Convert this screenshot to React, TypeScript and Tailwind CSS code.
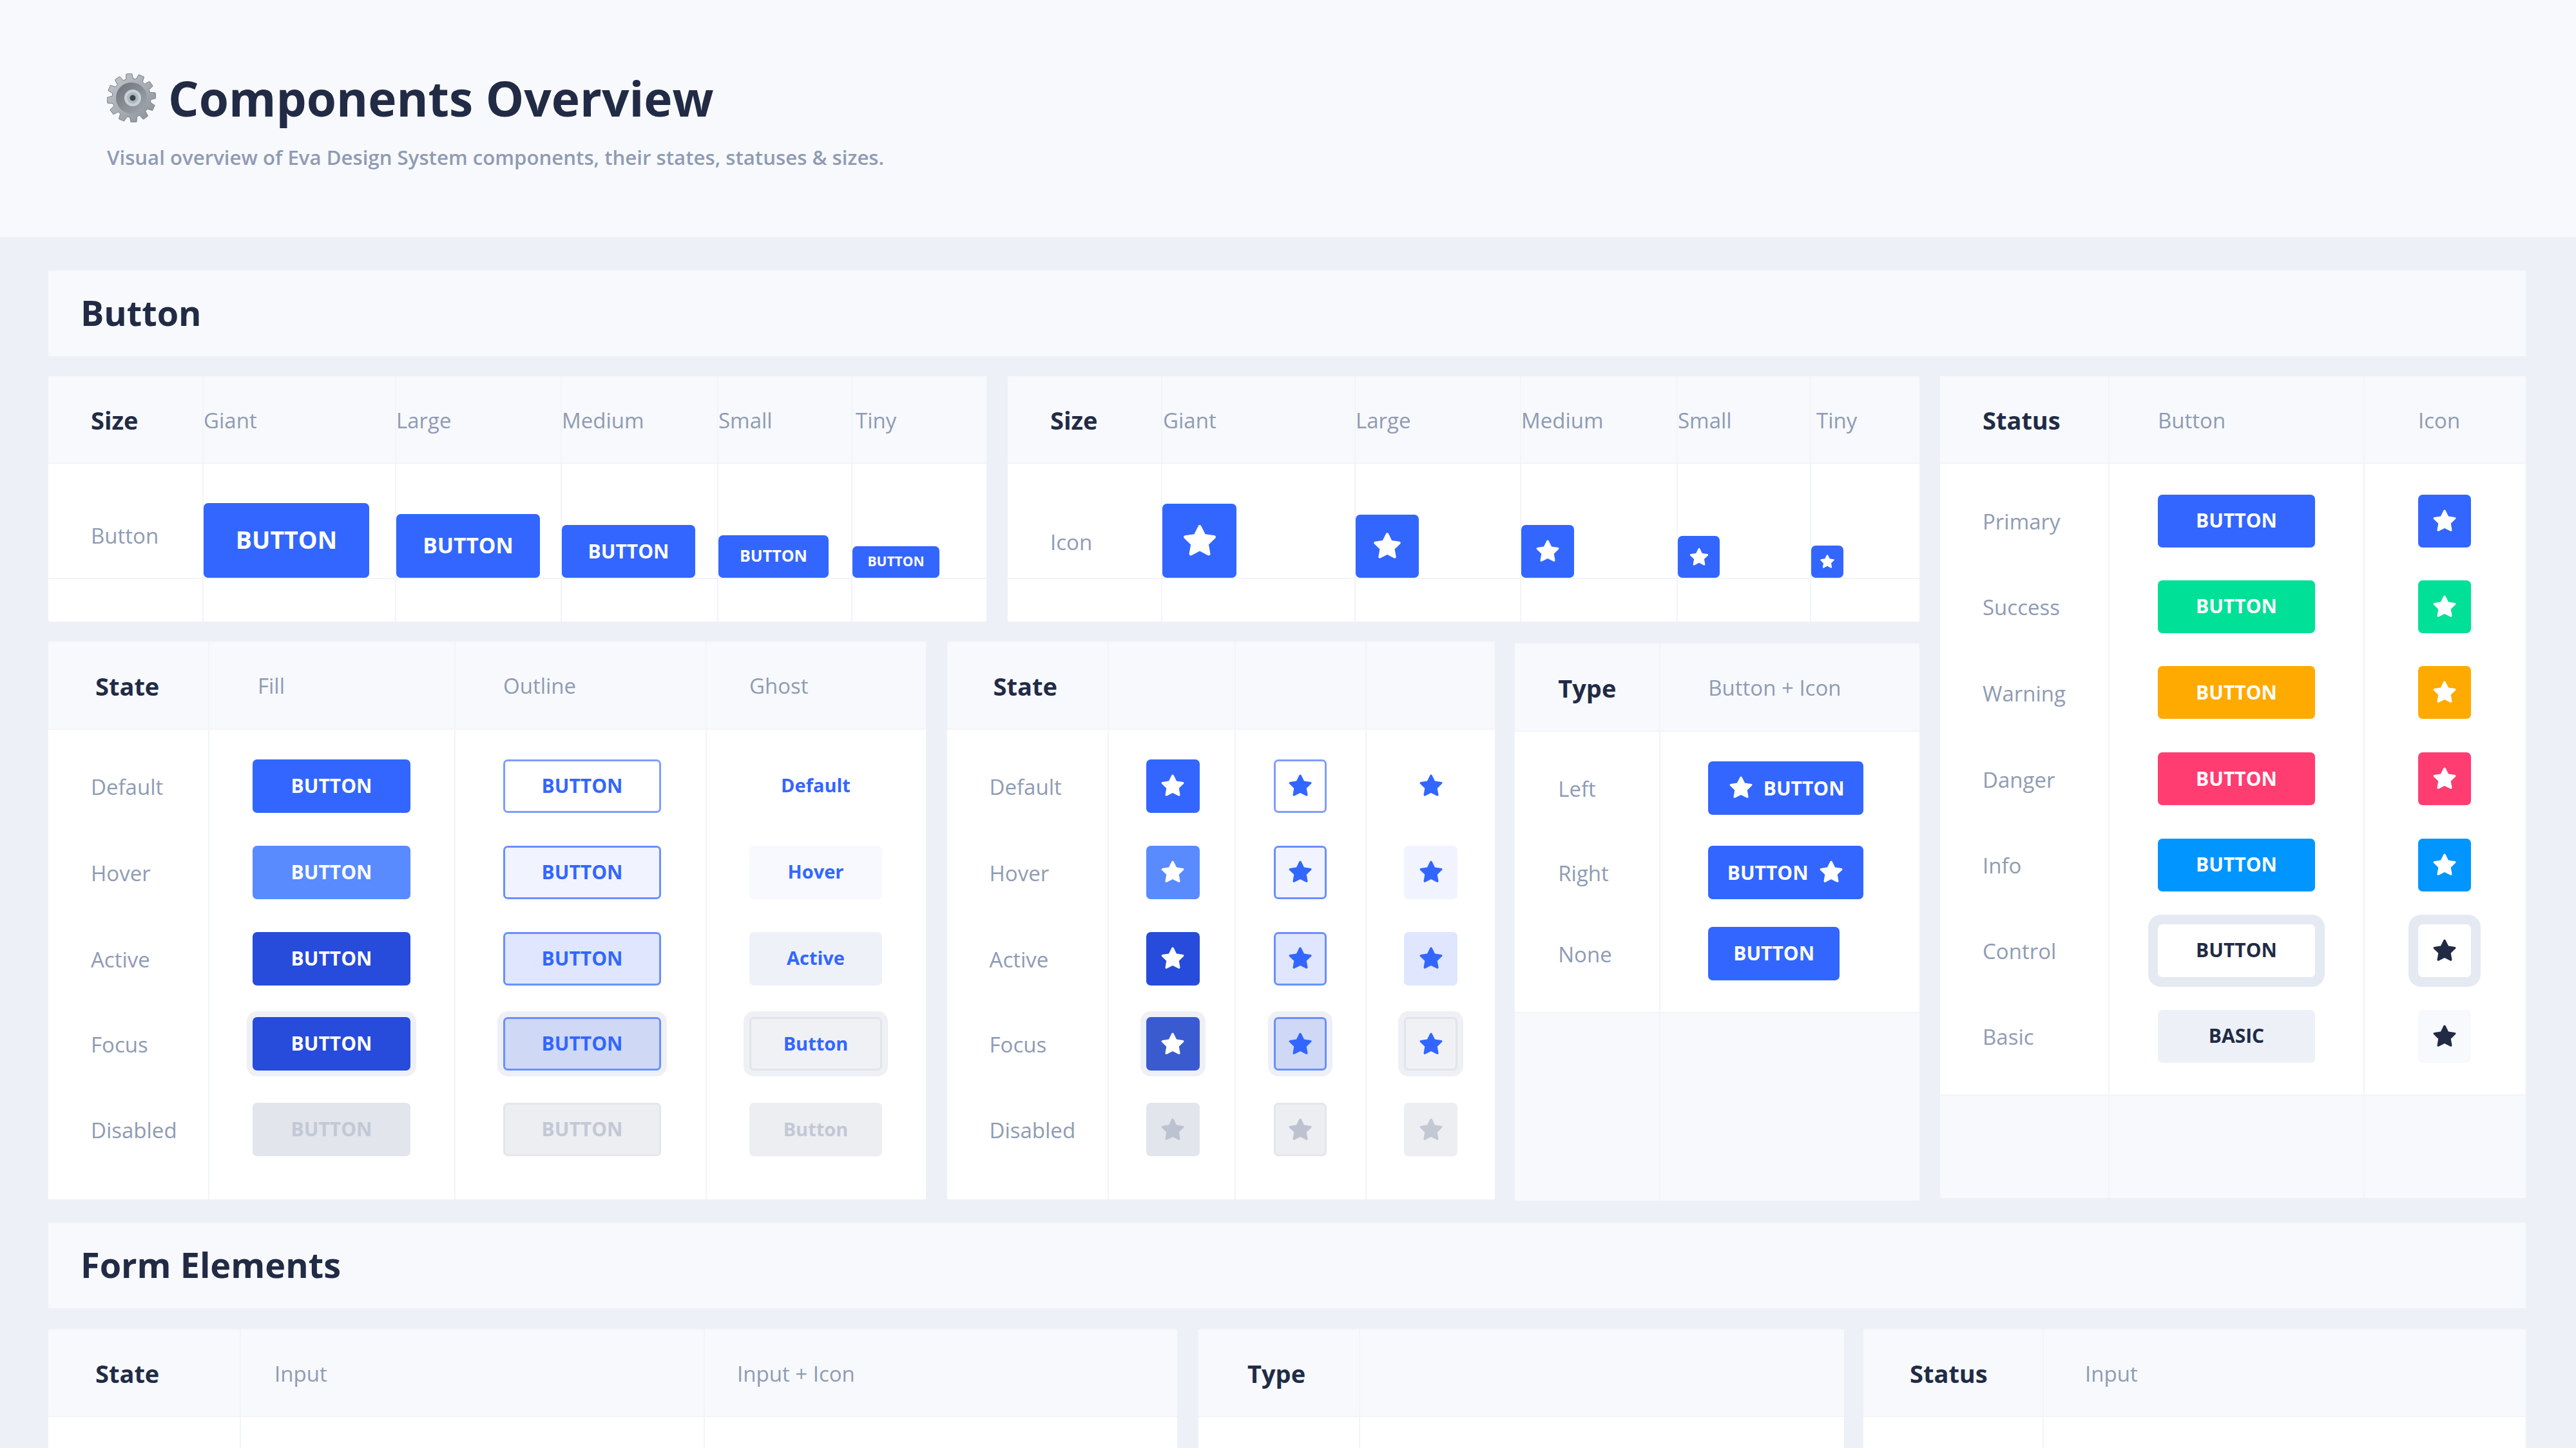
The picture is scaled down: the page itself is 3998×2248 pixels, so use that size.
import React from "react";

const STAR =
  "M17.56 21a1 1 0 0 1-.46-.11L12 18.22l-5.1 2.67a1 1 0 0 1-1.45-1.06l1-5.63-4.12-4a1 1 0 0 1-.25-1 1 1 0 0 1 .81-.68l5.7-.83 2.51-5.13a1 1 0 0 1 1.8 0l2.54 5.12 5.7.83a1 1 0 0 1 .81.68 1 1 0 0 1-.25 1l-4.12 4 1 5.63a1 1 0 0 1-.4 1 1 1 0 0 1-.62.18z";

function Star({ size = 42, color = "#ffffff" }: { size?: number; color?: string }) {
  return (
    <svg width={size} height={size} viewBox="0 0 24 24" fill={color} className="shrink-0">
      <path d={STAR} />
    </svg>
  );
}

function Gear() {
  const pts: string[] = [];
  const n = 12;
  for (let i = 0; i < n; i++) {
    const a = (i / n) * Math.PI * 2 - 0.1;
    const s = (Math.PI * 2) / n;
    const p = (r: number, o: number) =>
      `${(38 + r * Math.cos(a + o * s)).toFixed(1)},${(38 + r * Math.sin(a + o * s)).toFixed(1)}`;
    pts.push(p(30, -0.36), p(38, -0.22), p(38, 0.22), p(30, 0.36));
  }
  return (
    <svg width="76" height="76" viewBox="0 0 76 76" className="shrink-0">
      <defs>
        <linearGradient id="gearOuter" x1="0" y1="0" x2="1" y2="1">
          <stop offset="0" stopColor="#c2c8ce" />
          <stop offset="0.5" stopColor="#a8aeb5" />
          <stop offset="1" stopColor="#898e95" />
        </linearGradient>
        <linearGradient id="gearInner" x1="0" y1="0" x2="1" y2="1">
          <stop offset="0" stopColor="#6d7279" />
          <stop offset="1" stopColor="#a3a8ae" />
        </linearGradient>
      </defs>
      <polygon points={pts.join(" ")} fill="url(#gearOuter)" stroke="#7b8087" strokeWidth="1" />
      <circle cx="38" cy="38" r="24" fill="url(#gearInner)" />
      <circle cx="40" cy="38" r="13" fill="#c8d1da" />
      <circle cx="40" cy="38" r="9" fill="#aeb8c2" />
      <circle cx="40" cy="38" r="4.5" fill="#3f444b" />
    </svg>
  );
}

type Btn = {
  w: number;
  h: number;
  bg?: string;
  fg?: string;
  border?: string;
  ring?: string;
  ringW?: number;
  text?: string;
  fs?: number;
  star?: number;
};

function B({ w, h, bg = "transparent", fg = "#ffffff", border, ring, ringW = 9, text, fs = 30, star }: Btn) {
  return (
    <div
      className={`flex items-center justify-center rounded-[7px] font-bold ${text ? "pb-[2px]" : ""}`}
      style={{
        width: w,
        height: h,
        background: bg,
        color: fg,
        fontSize: fs,
        border: border ? `3px solid ${border}` : undefined,
        boxShadow: ring ? `0 0 0 ${ringW}px ${ring}` : undefined,
      }}
    >
      {text}
      {star ? <Star size={star} color={fg} /> : null}
    </div>
  );
}

function Label({ children }: { children: React.ReactNode }) {
  return <span className="mt-[2px] text-[33px] font-medium leading-none text-[#8f9bb3]">{children}</span>;
}
function HeadStrong({ children }: { children: React.ReactNode }) {
  return <span className="mt-[2px] text-[38px] font-bold leading-none text-[#222b45]">{children}</span>;
}

function Head({ cols, items, height = 136 }: { cols: string; items: { t?: string; strong?: boolean; pl: number }[]; height?: number }) {
  return (
    <div className="grid border-b-2 border-[#f1f4f9] bg-[#f7f9fc]" style={{ gridTemplateColumns: cols, height }}>
      {items.map((it, i) => (
        <div key={i} className={`flex items-center ${i ? "border-l-2 border-[#f1f4f9]" : ""}`} style={{ paddingLeft: it.pl }}>
          {it.t ? it.strong ? <HeadStrong>{it.t}</HeadStrong> : <Label>{it.t}</Label> : null}
        </div>
      ))}
    </div>
  );
}

function Row({ cols, height, cells }: { cols: string; height: number; cells: { node: React.ReactNode; pl?: number; center?: boolean }[] }) {
  return (
    <div className="grid" style={{ gridTemplateColumns: cols, height }}>
      {cells.map((c, i) => (
        <div
          key={i}
          className={`flex items-center ${c.center ? "justify-center" : ""} ${i ? "border-l-2 border-[#f1f4f9]" : ""}`}
          style={{ paddingLeft: c.pl ?? 0 }}
        >
          {c.node}
        </div>
      ))}
    </div>
  );
}

function Filler({ cols, n, height, bg = "#ffffff", top = false }: { cols: string; n: number; height?: number; bg?: string; top?: boolean }) {
  return (
    <div
      className={`grid ${top ? "border-t-2 border-[#f1f4f9]" : ""} ${height ? "" : "grow"}`}
      style={{ gridTemplateColumns: cols, height, background: bg }}
    >
      {Array.from({ length: n }).map((_, i) => (
        <div key={i} className={i ? "border-l-2 border-[#f1f4f9]" : ""} />
      ))}
    </div>
  );
}

function SizeCard({
  width,
  cols,
  items,
  label,
  labelPb,
}: {
  width: number;
  cols: string;
  items: { title: string; pl?: number; node: React.ReactNode }[];
  label: string;
  labelPb: number;
}) {
  return (
    <div className="flex h-[381px] flex-col overflow-hidden rounded-[3px] bg-white" style={{ width }}>
      <Head cols={cols} items={[{ t: "Size", strong: true, pl: 66 }, ...items.map((i) => ({ t: i.title, pl: i.pl ?? 0 }))]} />
      <div className="grid h-[177px]" style={{ gridTemplateColumns: cols }}>
        <div className="flex items-end pl-[66px]" style={{ paddingBottom: labelPb }}>
          <Label>{label}</Label>
        </div>
        {items.map((it, i) => (
          <div key={i} className="flex items-end border-l-2 border-[#f1f4f9]">
            {it.node}
          </div>
        ))}
      </div>
      <Filler cols={cols} n={items.length + 1} top />
    </div>
  );
}

const P = "#3366ff";
const states = ["Default", "Hover", "Active", "Focus", "Disabled"];
const stateHeights = [134, 134, 134, 131, 135];

const DIS_BG = "#e2e5ec";
const DIS_BG2 = "#eceef2";
const DIS_FG = "#c3c8d5";
const RING = "#eef0f6";

const fillStyles: Partial<Btn>[] = [
  { bg: P },
  { bg: "#598bff" },
  { bg: "#274bdb" },
  { bg: "#274bdb", ring: RING },
  { bg: DIS_BG, fg: DIS_FG },
];
const outlineStyles: Partial<Btn>[] = [
  { bg: "#ffffff", fg: P, border: "#7f9dff" },
  { bg: "#f1f4ff", fg: P, border: "#6a8fff" },
  { bg: "#dfe6fe", fg: P, border: "#6a8fff" },
  { bg: "#cfd9f6", fg: P, border: "#6a8fff", ring: RING },
  { bg: DIS_BG2, fg: DIS_FG, border: "#e4e6ec" },
];
const ghostStyles: Partial<Btn>[] = [
  { bg: "transparent", fg: P },
  { bg: "#f7f9fe", fg: P },
  { bg: "#eef1f8", fg: P },
  { bg: "#f0f1f5", fg: P, border: "#e2e4ea", ring: RING },
  { bg: "#eceef2", fg: DIS_FG },
];
const ghostIconStyles: Partial<Btn>[] = [
  { bg: "transparent", fg: P },
  { bg: "#f1f4ff", fg: P },
  { bg: "#dfe6fe", fg: P },
  { bg: "#f0f1f5", fg: P, border: "#e2e4ea", ring: RING },
  { bg: "#eceef2", fg: DIS_FG },
];
const iconFillStyles: Partial<Btn>[] = [
  { bg: P },
  { bg: "#598bff" },
  { bg: "#274bdb" },
  { bg: "#3a5bd0", ring: RING },
  { bg: DIS_BG, fg: "#bcc2d0" },
];
const iconOutlineStyles: Partial<Btn>[] = outlineStyles.map((s, i) => (i === 4 ? { ...s, fg: "#bcc2d0" } : s));
const ghostTexts = ["Default", "Hover", "Active", "Button", "Button"];

const statusRows: { l: string; bg: string; fg?: string; ring?: boolean; text?: string; icoBg?: string }[] = [
  { l: "Primary", bg: P },
  { l: "Success", bg: "#00e096" },
  { l: "Warning", bg: "#ffaa00" },
  { l: "Danger", bg: "#ff3d71" },
  { l: "Info", bg: "#0095ff" },
  { l: "Control", bg: "#ffffff", fg: "#222b45", ring: true },
  { l: "Basic", bg: "#edf1f7", fg: "#222b45", text: "BASIC", icoBg: "#f7f9fc" },
];
const statusHeights = [133, 133, 134, 134, 133, 133, 133];

const c1 = "239px 299px 257px 243px 208px 210px";
const c2 = "238px 300px 257px 243px 207px 170px";
const c3 = "248px 382px 390px 342px";
const c4 = "249px 197px 203px 202px";
const c5 = "224px 404px";
const c6 = "261px 396px 252px";
const c7 = "297px 720px 735px";
const c8 = "249px 753px";
const c9 = "278px 750px";

export default function App() {
  return (
    <div
      className="h-[2248px] w-[3998px] overflow-hidden bg-[#edf1f7]"
      style={{ fontFamily: '"Open Sans", "Liberation Sans", sans-serif' }}
    >
      <header className="flex h-[368px] flex-col bg-[#f7f9fc] pl-[166px] pt-[108px]">
        <div className="flex items-center gap-[19px]">
          <Gear />
          <h1 className="text-[74.8px] font-bold leading-[88px] text-[#222b45]">Components Overview</h1>
        </div>
        <p className="mt-[28px] text-[31.2px] font-semibold leading-[40px] text-[#8f9bb3]">
          Visual overview of Eva Design System components, their states, statuses &amp; sizes.
        </p>
      </header>

      <main className="pl-[75px] pr-[78px] pt-[52px]">
        <section className="flex h-[133px] items-center bg-[#f7f9fc] pb-[3px] pl-[50px]">
          <h2 className="text-[54px] font-bold leading-none text-[#222b45]">Button</h2>
        </section>

        <div className="mt-[31px] flex items-start gap-[32px]">
          <div className="flex w-[2904px] flex-col gap-[31px]">
            <div className="flex gap-[33px]">
              <SizeCard
                width={1456}
                cols={c1}
                label="Button"
                labelPb={49}
                items={[
                  { title: "Giant", node: <B w={257} h={116} bg={P} text="BUTTON" fs={37.5} /> },
                  { title: "Large", node: <B w={223} h={99} bg={P} text="BUTTON" fs={33.5} /> },
                  { title: "Medium", node: <B w={207} h={82} bg={P} text="BUTTON" fs={30} /> },
                  { title: "Small", node: <B w={171} h={66} bg={P} text="BUTTON" fs={25} /> },
                  { title: "Tiny", pl: 5, node: <B w={135} h={49} bg={P} text="BUTTON" fs={21} /> },
                ]}
              />
              <SizeCard
                width={1415}
                cols={c2}
                label="Icon"
                labelPb={39}
                items={[
                  { title: "Giant", pl: 1, node: <B w={115} h={115} bg={P} star={60} /> },
                  { title: "Large", node: <B w={98} h={98} bg={P} star={50} /> },
                  { title: "Medium", node: <B w={82} h={82} bg={P} star={42} /> },
                  { title: "Small", node: <B w={65} h={65} bg={P} star={34} /> },
                  { title: "Tiny", pl: 8, node: <B w={50} h={50} bg={P} star={26} /> },
                ]}
              />
            </div>

            <div className="flex items-start">
              <div className="flex h-[866px] w-[1362px] flex-col overflow-hidden rounded-[3px] bg-white">
                <Head
                  cols={c3}
                  height={137}
                  items={[
                    { t: "State", strong: true, pl: 73 },
                    { t: "Fill", pl: 75 },
                    { t: "Outline", pl: 74 },
                    { t: "Ghost", pl: 66 },
                  ]}
                />
                <Filler cols={c3} n={4} height={20} />
                {states.map((s, i) => (
                  <Row
                    key={s}
                    cols={c3}
                    height={stateHeights[i]}
                    cells={[
                      { node: <Label>{s}</Label>, pl: 66 },
                      { node: <B w={245} h={83} text="BUTTON" {...fillStyles[i]} />, pl: 67 },
                      { node: <B w={245} h={83} text="BUTTON" {...outlineStyles[i]} />, pl: 74 },
                      { node: <B w={206} h={83} text={ghostTexts[i]} fs={29} {...ghostStyles[i]} />, pl: 66 },
                    ]}
                  />
                ))}
                <Filler cols={c3} n={4} />
              </div>

              <div className="ml-[33px] flex h-[866px] w-[851px] flex-col overflow-hidden rounded-[3px] bg-white">
                <Head cols={c4} height={137} items={[{ t: "State", strong: true, pl: 72 }, { pl: 0 }, { pl: 0 }, { pl: 0 }]} />
                <Filler cols={c4} n={4} height={20} />
                {states.map((s, i) => (
                  <Row
                    key={s}
                    cols={c4}
                    height={stateHeights[i]}
                    cells={[
                      { node: <Label>{s}</Label>, pl: 66 },
                      { node: <B w={83} h={83} star={42} {...iconFillStyles[i]} />, pl: 58 },
                      { node: <B w={82} h={83} star={42} {...iconOutlineStyles[i]} />, center: true },
                      { node: <B w={83} h={83} star={42} {...ghostIconStyles[i]} />, center: true },
                    ]}
                  />
                ))}
                <Filler cols={c4} n={4} />
              </div>

              <div className="ml-[31px] mt-[3px] flex h-[865px] w-[628px] flex-col overflow-hidden rounded-[3px] bg-white">
                <Head
                  cols={c5}
                  height={137}
                  items={[
                    { t: "Type", strong: true, pl: 67 },
                    { t: "Button + Icon", pl: 74 },
                  ]}
                />
                <Filler cols={c5} n={2} height={21} />
                <Row
                  cols={c5}
                  height={132}
                  cells={[
                    { node: <Label>Left</Label>, pl: 67 },
                    {
                      node: (
                        <div className="flex h-[83px] w-[241px] items-center justify-center gap-[14px] rounded-[7px] bg-[#3366ff] text-[30px] font-bold text-white">
                          <Star size={42} />
                          BUTTON
                        </div>
                      ),
                      pl: 74,
                    },
                  ]}
                />
                <Row
                  cols={c5}
                  height={130}
                  cells={[
                    { node: <Label>Right</Label>, pl: 67 },
                    {
                      node: (
                        <div className="flex h-[83px] w-[241px] items-center justify-center gap-[14px] rounded-[7px] bg-[#3366ff] text-[30px] font-bold text-white">
                          BUTTON
                          <Star size={42} />
                        </div>
                      ),
                      pl: 74,
                    },
                  ]}
                />
                <Row
                  cols={c5}
                  height={123}
                  cells={[
                    { node: <Label>None</Label>, pl: 67 },
                    { node: <B w={204} h={83} bg={P} text="BUTTON" />, pl: 74 },
                  ]}
                />
                <Filler cols={c5} n={2} height={29} />
                <Filler cols={c5} n={2} bg="#f7f9fc" top />
              </div>
            </div>
          </div>

          <div className="flex h-[1276px] w-[909px] flex-col overflow-hidden rounded-[3px] bg-white">
            <Head
              cols={c6}
              items={[
                { t: "Status", strong: true, pl: 66 },
                { t: "Button", pl: 75 },
                { t: "Icon", pl: 83 },
              ]}
            />
            <Filler cols={c6} n={3} height={22} />
            {statusRows.map((r, i) => (
              <Row
                key={r.l}
                cols={c6}
                height={statusHeights[i]}
                cells={[
                  { node: <Label>{r.l}</Label>, pl: 66 },
                  {
                    node: (
                      <B
                        w={244}
                        h={82}
                        bg={r.bg}
                        fg={r.fg}
                        text={r.text ?? "BUTTON"}
                        ring={r.ring ? "#e4e9f2" : undefined}
                        ringW={15}
                      />
                    ),
                    pl: 75,
                  },
                  {
                    node: (
                      <B
                        w={82}
                        h={82}
                        bg={r.icoBg ?? r.bg}
                        fg={r.fg}
                        star={42}
                        ring={r.ring ? "#e4e9f2" : undefined}
                        ringW={15}
                      />
                    ),
                    pl: 83,
                  },
                ]}
              />
            ))}
            <Filler cols={c6} n={3} height={24} />
            <Filler cols={c6} n={3} bg="#f7f9fc" top />
          </div>
        </div>

        <section className="mt-[34px] flex h-[133px] items-center bg-[#f7f9fc] pb-[3px] pl-[50px]">
          <h2 className="text-[54px] font-bold leading-none text-[#222b45]">Form Elements</h2>
        </section>

        <div className="mt-[33px] flex">
          <div className="h-[400px] w-[1752px] shrink-0 bg-white">
            <Head
              cols={c7}
              items={[
                { t: "State", strong: true, pl: 73 },
                { t: "Input", pl: 52 },
                { t: "Input + Icon", pl: 50 },
              ]}
            />
            <Filler cols={c7} n={3} height={264} />
          </div>
          <div className="ml-[33px] h-[400px] w-[1002px] shrink-0 bg-white">
            <Head
              cols={c8}
              items={[
                { t: "Type", strong: true, pl: 76 },
                { pl: 0 },
              ]}
            />
            <Filler cols={c8} n={2} height={264} />
          </div>
          <div className="ml-[30px] h-[400px] w-[1028px] shrink-0 bg-white">
            <Head
              cols={c9}
              items={[
                { t: "Status", strong: true, pl: 72 },
                { t: "Input", pl: 64 },
              ]}
            />
            <Filler cols={c9} n={2} height={264} />
          </div>
        </div>
      </main>
    </div>
  );
}
